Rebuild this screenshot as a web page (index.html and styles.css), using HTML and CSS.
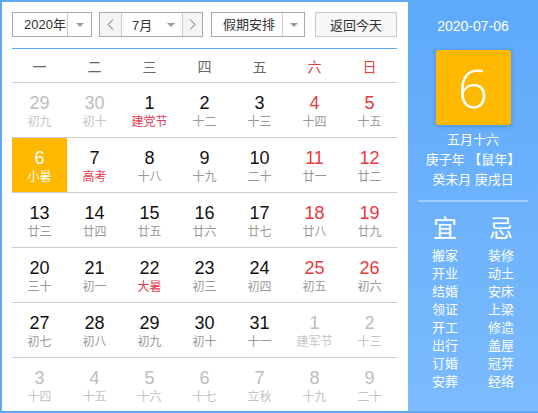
FILE: index.html
```html
<!DOCTYPE html>
<html lang="zh-CN">
<head>
<meta charset="utf-8">
<title>万年历</title>
<link rel="stylesheet" href="styles.css">
</head>
<body>
<div class="cal">
  <div class="main">
    <div class="bar">
      <div class="sel sel-year">
        <span class="sel-text">2020年</span>
        <span class="sel-arrow"><i class="tri"></i></span>
      </div>
      <div class="sel sel-month">
        <span class="nav"><svg width="7" height="11" viewBox="0 0 7 11"><polyline points="6,0.5 1,5.5 6,10.5" fill="none" stroke="#666" stroke-width="1"/></svg></span>
        <span class="month-mid"><span>7月</span><i class="tri"></i></span>
        <span class="nav"><svg width="7" height="11" viewBox="0 0 7 11"><polyline points="1,0.5 6,5.5 1,10.5" fill="none" stroke="#666" stroke-width="1"/></svg></span>
      </div>
      <div class="sel sel-holiday">
        <span class="sel-text">假期安排</span>
        <span class="sel-arrow"><i class="tri"></i></span>
      </div>
      <div class="btn-today">返回今天</div>
    </div>
    <div class="week">
      <span>一</span><span>二</span><span>三</span><span>四</span><span>五</span><span class="red">六</span><span class="red">日</span>
    </div>
    <div class="days">
      <div class="d other"><b>29</b><em>初九</em></div>
      <div class="d other"><b>30</b><em>初十</em></div>
      <div class="d"><b>1</b><em class="fest">建党节</em></div>
      <div class="d"><b>2</b><em>十二</em></div>
      <div class="d"><b>3</b><em>十三</em></div>
      <div class="d wk"><b>4</b><em>十四</em></div>
      <div class="d wk"><b>5</b><em>十五</em></div>

      <div class="d today"><b>6</b><em>小暑</em></div>
      <div class="d"><b>7</b><em class="fest">高考</em></div>
      <div class="d"><b>8</b><em>十八</em></div>
      <div class="d"><b>9</b><em>十九</em></div>
      <div class="d"><b>10</b><em>二十</em></div>
      <div class="d wk"><b>11</b><em>廿一</em></div>
      <div class="d wk"><b>12</b><em>廿二</em></div>

      <div class="d"><b>13</b><em>廿三</em></div>
      <div class="d"><b>14</b><em>廿四</em></div>
      <div class="d"><b>15</b><em>廿五</em></div>
      <div class="d"><b>16</b><em>廿六</em></div>
      <div class="d"><b>17</b><em>廿七</em></div>
      <div class="d wk"><b>18</b><em>廿八</em></div>
      <div class="d wk"><b>19</b><em>廿九</em></div>

      <div class="d"><b>20</b><em>三十</em></div>
      <div class="d"><b>21</b><em>初一</em></div>
      <div class="d"><b>22</b><em class="fest">大暑</em></div>
      <div class="d"><b>23</b><em>初三</em></div>
      <div class="d"><b>24</b><em>初四</em></div>
      <div class="d wk"><b>25</b><em>初五</em></div>
      <div class="d wk"><b>26</b><em>初六</em></div>

      <div class="d"><b>27</b><em>初七</em></div>
      <div class="d"><b>28</b><em>初八</em></div>
      <div class="d"><b>29</b><em>初九</em></div>
      <div class="d"><b>30</b><em>初十</em></div>
      <div class="d"><b>31</b><em>十一</em></div>
      <div class="d other"><b>1</b><em>建军节</em></div>
      <div class="d other"><b>2</b><em>十三</em></div>

      <div class="d other"><b>3</b><em>十四</em></div>
      <div class="d other"><b>4</b><em>十五</em></div>
      <div class="d other"><b>5</b><em>十六</em></div>
      <div class="d other"><b>6</b><em>十七</em></div>
      <div class="d other"><b>7</b><em>立秋</em></div>
      <div class="d other"><b>8</b><em>十九</em></div>
      <div class="d other"><b>9</b><em>二十</em></div>
    </div>
  </div>
  <div class="side">
    <div class="side-date">2020-07-06</div>
    <div class="side-day">6</div>
    <div class="side-lunar">
      <p>五月十六</p>
      <p>庚子年 【鼠年】</p>
      <p>癸未月 庚戌日</p>
    </div>
    <div class="side-sep"></div>
    <div class="yiji">
      <div class="col">
        <div class="head">宜</div>
        <p>搬家</p><p>开业</p><p>结婚</p><p>领证</p><p>开工</p><p>出行</p><p>订婚</p><p>安葬</p>
      </div>
      <div class="col">
        <div class="head">忌</div>
        <p>装修</p><p>动土</p><p>安床</p><p>上梁</p><p>修造</p><p>盖屋</p><p>冠笄</p><p>经络</p>
      </div>
    </div>
  </div>
</div>
</body>
</html>
```

FILE: styles.css
```css
* { box-sizing: border-box; margin: 0; padding: 0; }
body {
  margin: 0;
  font-family: "Liberation Sans", "Noto Sans CJK SC", sans-serif;
  background: #fff;
}
.cal {
  width: 538px;
  height: 413px;
  display: flex;
  border: 2px solid #5fa9f8;
  border-right: 0;
  overflow: hidden;
}
.main {
  width: 406px;
  padding: 10px 11px 0 10px;
  background: #fff;
  overflow: hidden;
}
.bar {
  display: flex;
  height: 25px;
  font-size: 13px;
  color: #333;
  white-space: nowrap;
}
.sel {
  display: flex;
  height: 25px;
  border: 1px solid #a9a9a9;
  background: #fff;
  flex-shrink: 0;
}
.sel-year { width: 80px; margin-right: 7px; }
.sel-month { width: 104px; margin-right: 8px; }
.sel-holiday { width: 94px; margin-right: 10px; }
.sel-text {
  flex: 1;
  min-width: 0;
  display: flex;
  align-items: center;
  padding-left: 11px;
  line-height: 23px;
  white-space: nowrap;
  overflow: hidden;
}
.sel-year .sel-text { padding-left: 11px; }
.sel-arrow {
  display: flex;
  align-items: center;
  justify-content: center;
  border-left: 1px solid #ccc;
  flex-shrink: 0;
}
.sel-year .sel-arrow { width: 24px; }
.sel-holiday .sel-arrow { width: 22px; }
.tri {
  display: block;
  width: 0;
  height: 0;
  border-left: 4px solid transparent;
  border-right: 4px solid transparent;
  border-top: 4px solid #999;
}
.nav {
  display: flex;
  align-items: center;
  justify-content: center;
  background: #f5f5f5;
  flex-shrink: 0;
}
.nav:first-child { width: 22px; border-right: 1px solid #ccc; }
.nav:last-child { width: 20px; border-left: 1px solid #ccc; }
.month-mid {
  flex: 1;
  display: flex;
  align-items: center;
  justify-content: space-between;
  padding: 0 7px 0 10px;
}
.btn-today {
  width: 82px;
  height: 25px;
  border: 1px solid #ccc;
  background: #f7f7f7;
  display: flex;
  align-items: center;
  justify-content: center;
  flex-shrink: 0;
}
.week {
  margin-top: 11px;
  border-top: 1px solid #5ea9f8;
  height: 34px;
  display: grid;
  grid-template-columns: repeat(7, 55px);
  align-items: center;
  font-size: 14px;
  color: #666;
  text-align: center;
  font-family: "Noto Sans CJK SC", sans-serif;
}
.week span { line-height: 32px; }
.red { color: #e8403f; }
.days {
  display: grid;
  grid-template-columns: repeat(7, 55px);
  grid-auto-rows: 55px;
}
.d {
  border-top: 1px solid #ccc;
  padding-top: 10px;
  text-align: center;
  display: flex;
  flex-direction: column;
}
.d b {
  font-weight: normal;
  font-size: 18px;
  line-height: 20px;
  color: #111;
}
.d em {
  font-style: normal;
  font-size: 12px;
  line-height: 18px;
  color: #999;
}
.d.wk b { color: #e8393d; }
.d em.fest { color: #e8394a; }
.d.other b { color: #bdbdbd; }
.d.other em { color: #c4c4c4; }
.d.today {
  background: #ffb800;
}
.d.today b, .d.today em { color: #fff; }

.side {
  width: 130px;
  background: linear-gradient(#5da9fa, #7bbbfd);
  color: #fff;
  display: flex;
  flex-direction: column;
  align-items: center;
}
.side-date {
  margin-top: 14px;
  font-size: 14px;
  line-height: 20px;
}
.side-day {
  margin-top: 14px;
  width: 75px;
  height: 75px;
  background: #ffb800;
  border-radius: 3px;
  box-shadow: 0 1px 4px rgba(0, 60, 140, 0.3);
  font-family: "Open Sans", "Liberation Sans", sans-serif;
  font-weight: 300;
  font-size: 54px;
  line-height: 75px;
  text-align: center;
}
.side-lunar {
  margin-top: 5px;
  font-size: 13px;
  line-height: 20px;
  text-align: center;
}
.side-sep {
  margin-top: 10px;
  width: 110px;
  height: 2px;
  background: rgba(255, 255, 255, 0.35);
}
.yiji {
  display: grid;
  grid-template-columns: 56px 56px;
  margin-top: 12px;
}
.col {
  text-align: center;
  font-size: 13px;
  line-height: 18px;
}
.col .head {
  font-size: 24px;
  line-height: 30px;
  margin-bottom: 3px;
}
```
